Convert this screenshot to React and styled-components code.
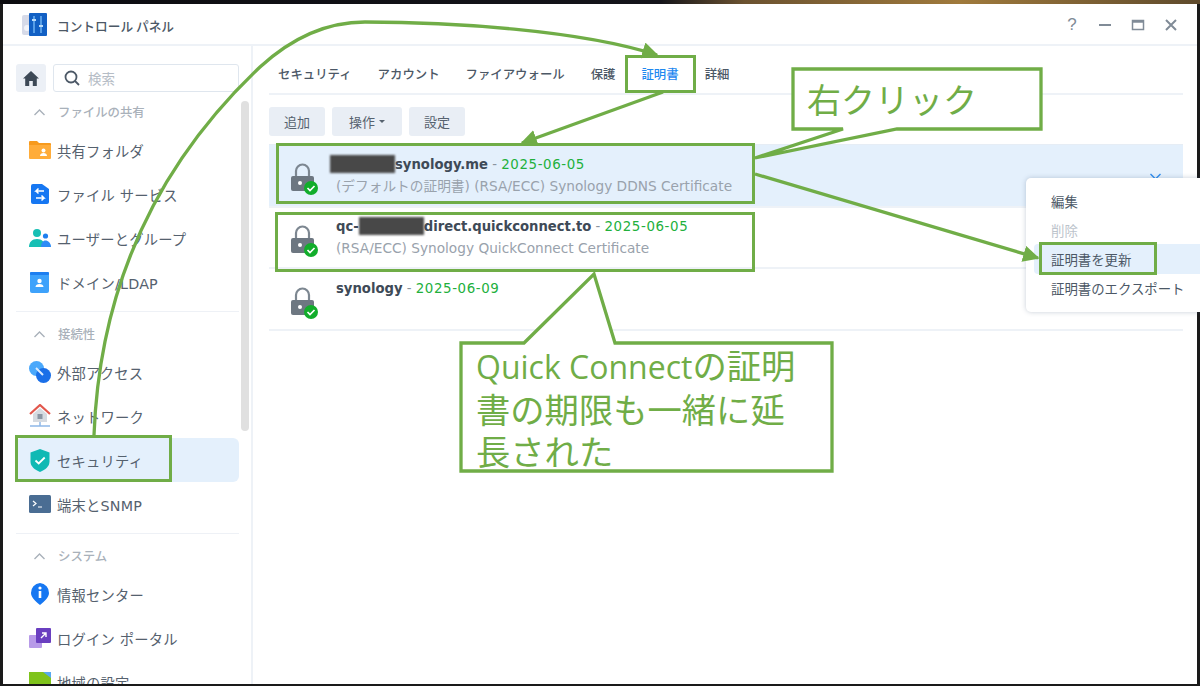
import React from 'react';
import styled, { createGlobalStyle } from 'styled-components';

const UI_FONT = '"DejaVu Sans", "Noto Sans CJK JP", sans-serif';
const GREEN = '#70ad47';

const GlobalStyle = createGlobalStyle`
  html, body { margin: 0; padding: 0; background: #fff; }
  * { box-sizing: border-box; }
`;

const Page = styled.div`
  position: relative;
  width: 1200px;
  height: 686px;
  padding: 4px 3px 2px 3px;
  overflow: hidden;
  font-family: ${UI_FONT};
  background: linear-gradient(90deg, #0c0c10 0%, #14141a 55%, #6b5230 62%, #a07a3c 80%, #5e4a2c 100%) top / 100% 4px no-repeat, #1a1a1a;
`;

const Window = styled.div`
  display: flex;
  flex-direction: column;
  height: 100%;
  background: #fff;
  overflow: hidden;
`;

const TitleBar = styled.header`
  display: flex;
  align-items: center;
  height: 42px;
  flex-shrink: 0;
  padding: 2px 19px 0 19px;
  border-bottom: 2px solid #eef2f7;
`;

const AppTitle = styled.h1`
  margin: 0 0 0 10px;
  font-size: 12.7px;
  font-weight: 500;
  color: #4c5866;
  font-family: "Noto Sans CJK JP", sans-serif;
`;

const WindowButtons = styled.div`
  display: flex;
  gap: 19px;
  margin-left: auto;
`;

const WindowButton = styled.span`
  display: flex;
  align-items: center;
  justify-content: center;
  width: 14px;
  height: 14px;
  color: #808b97;
  font-size: 17px;
  font-family: "Liberation Sans", sans-serif;
`;

const Body = styled.div`
  display: flex;
  flex: 1;
  min-height: 0;
`;

const Sidebar = styled.aside`
  width: 250px;
  flex-shrink: 0;
  padding: 18px 12px 0 13px;
  border-right: 2px solid #eef2f7;
  overflow: hidden;
`;

const SearchRow = styled.div`
  display: flex;
  gap: 7px;
  height: 28px;
  margin-bottom: 4px;
`;

const HomeButton = styled.div`
  display: flex;
  align-items: center;
  justify-content: center;
  width: 30px;
  background: #ecf0f6;
  border-radius: 3px;
  color: #3d4956;
`;

const SearchBox = styled.div`
  display: flex;
  align-items: center;
  flex: 1;
  gap: 8px;
  padding-left: 10px;
  border: 1px solid #dfe6ee;
  border-radius: 3px;
  font-size: 13.5px;
  color: #b6bdc6;
  font-family: "Noto Sans CJK JP", sans-serif;
`;

const SectionHead = styled.div`
  display: flex;
  align-items: center;
  height: 32px;
  padding-left: 17px;
  gap: 12px;
  font-size: 12.4px;
  font-weight: 500;
  color: #a9b1ba;
`;

const SectionRule = styled.hr`
  margin: 7px 0 6px;
  border: 0;
  border-top: 1px solid #eef1f6;
`;

const NavItem = styled.div`
  display: flex;
  align-items: center;
  height: 44px;
  padding-left: 12px;
  gap: 6px;
  font-size: 14.3px;
  letter-spacing: 0.2px;
  color: #55616e;
  border-radius: 6px;
  background: ${props => (props.$active ? '#e4f0fc' : 'transparent')};
`;

const NavIcon = styled.span`
  display: flex;
  align-items: center;
  justify-content: center;
  width: 23px;
  height: 24px;
  flex-shrink: 0;
`;

const ScrollThumb = styled.div`
  position: absolute;
  left: 241px;
  top: 101px;
  width: 8px;
  height: 330px;
  background: #e0e0e0;
  border-radius: 4px;
`;

const Main = styled.main`
  flex: 1;
  min-width: 0;
  padding: 0 14px 0 16px;
`;

const Tabs = styled.nav`
  display: flex;
  align-items: center;
  height: 49px;
  padding: 8px 0 0 9px;
  gap: 26px;
  border-bottom: 2px solid #eef2f7;
`;

const Tab = styled.span`
  font-size: 12.4px;
  font-weight: 500;
  font-family: "Noto Sans CJK JP", sans-serif;
  color: ${props => (props.$active ? '#1e88f0' : '#4c5866')};
`;

const Toolbar = styled.div`
  display: flex;
  gap: 7px;
  margin-top: 12px;
`;

const ToolButton = styled.button`
  display: flex;
  align-items: center;
  justify-content: center;
  gap: 4px;
  height: 29px;
  width: ${props => props.$width}px;
  padding: 0;
  border: 0;
  border-radius: 3px;
  background: #e9eef5;
  color: #56626f;
  font-size: 13px;
  font-family: "Noto Sans CJK JP", sans-serif;
`;

const Caret = styled.i`
  width: 0;
  height: 0;
  border: 3px solid transparent;
  border-top: 3px solid #56626f;
  margin-top: 3px;
`;

const CertList = styled.div`
  margin-top: 8px;
  border-top: 1px solid #e6edf5;
`;

const CertRow = styled.div`
  display: flex;
  align-items: flex-start;
  height: ${props => props.$height}px;
  padding: ${props => props.$top}px 18px 0 22px;
  gap: 18px;
  border-bottom: 2px solid #eef2f7;
  background: ${props => (props.$selected ? '#e4f0fc' : '#fff')};
`;

const LockWrap = styled.div`
  width: 27px;
  height: 34px;
  margin-top: 7px;
  flex-shrink: 0;
`;

const CertText = styled.div`
  display: flex;
  flex-direction: column;
  gap: 5px;
  flex: 1;
`;

const CertTitle = styled.div`
  display: flex;
  align-items: center;
  height: 18px;
  font-size: 13.2px;
  color: #8a949f;
  white-space: pre;
`;

const CertName = styled.b`
  color: #3e4a57;
  font-weight: 700;
`;

const CertDate = styled.span`
  color: #22b03c;
  font-size: 13.4px;
  letter-spacing: 0.6px;
`;

const Redacted = styled.span`
  display: inline-block;
  width: 65px;
  height: 18px;
  margin-left: ${props => props.$shift || 0}px;
  background: #484848;
  filter: blur(0.8px);
`;

const CertNote = styled.div`
  height: 16px;
  line-height: 16px;
  font-size: 13.7px;
  color: #99a2ac;
  white-space: nowrap;
`;

const RowChevron = styled.div`
  margin: 15px 3px 0 0;
  color: #2d8cf0;
  line-height: 0;
`;

const ContextMenu = styled.div`
  position: absolute;
  left: 1026px;
  top: 178px;
  width: 190px;
  height: 134px;
  padding: 8px 0 0 8px;
  background: #fff;
  border-radius: 5px;
  box-shadow: 0 0 5px rgba(70, 90, 120, 0.3);
`;

const MenuItem = styled.div`
  display: flex;
  align-items: center;
  height: 30px;
  padding-left: 17px;
  margin-bottom: -1px;
  font-size: 13.4px;
  font-family: "Noto Sans CJK JP", sans-serif;
  border-radius: 4px 0 0 4px;
  color: ${props => (props.$disabled ? '#bcc3cb' : '#4c5866')};
  background: ${props => (props.$hover ? '#e4f0fc' : 'transparent')};
`;

const Marker = styled.div`
  position: absolute;
  left: ${props => props.$x}px;
  top: ${props => props.$y}px;
  width: ${props => props.$w}px;
  height: ${props => props.$h}px;
  border: 3px solid ${GREEN};
`;

const Annotations = styled.svg`
  position: absolute;
  inset: 0;
  width: 1200px;
  height: 686px;
`;

const CalloutText = styled.div`
  position: absolute;
  left: ${props => props.$x}px;
  top: ${props => props.$y}px;
  width: ${props => props.$w}px;
  color: ${GREEN};
  font-family: "Open Sans", "Noto Sans CJK JP", sans-serif;
  font-size: ${props => props.$size}px;
  line-height: ${props => props.$line}px;
  font-weight: 400;
  white-space: pre-line;
`;

const CalloutLatin = styled.span`
  font-size: 32px;
`;

function FolderIcon() {
  return (
    <svg width="22" height="20" viewBox="0 0 22 20">
      <path d="M0 2a1 1 0 0 1 1-1h7l2 2h11a1 1 0 0 1 1 1v2H0z" fill="#f79a1e" />
      <path d="M0 5h22v13a1 1 0 0 1-1 1H1a1 1 0 0 1-1-1z" fill="#ffac3a" />
      <circle cx="14.5" cy="10.5" r="2" fill="#fff" />
      <path d="M11 16c0-2 1.500-3 3.500-3s3.500 1 3.500 3z" fill="#fff" />
    </svg>
  );
}

function FileServiceIcon() {
  return (
    <svg width="20" height="22" viewBox="0 0 20 22">
      <path d="M1 3a2 2 0 0 1 2-2h9l7 5v13a2 2 0 0 1-2 2H3a2 2 0 0 1-2-2z" fill="#1677f2" />
      <path d="M14 8H6l2.500-2.500M6 8l2.500 2.500M6 15h8l-2.500-2.500M14 15l-2.500 2.500" stroke="#fff" strokeWidth="1.500" fill="none" />
    </svg>
  );
}

function UsersIcon() {
  return (
    <svg width="22" height="20" viewBox="0 0 22 20">
      <circle cx="8" cy="5" r="4" fill="#17bfb4" />
      <path d="M0 19c0-5 3-8 8-8s8 3 8 8z" fill="#17bfb4" />
      <circle cx="16.500" cy="8" r="2.600" fill="#1e7ff0" />
      <path d="M12 19c0-4 2-6.500 4.500-6.500S22 15 22 19z" fill="#2d8cf6" />
    </svg>
  );
}

function DomainIcon() {
  return (
    <svg width="19" height="21" viewBox="0 0 19 21">
      <rect x="0" y="0" width="19" height="21" rx="2" fill="#3ea2fb" />
      <rect x="0" y="0" width="19" height="3" rx="1" fill="#1e7ff0" />
      <circle cx="9.500" cy="9" r="2.200" fill="#fff" />
      <path d="M5.500 15c0-2 1.800-3 4-3s4 1 4 3z" fill="#fff" />
    </svg>
  );
}

function LinkIcon() {
  return (
    <svg width="22" height="22" viewBox="0 0 22 22">
      <circle cx="7.500" cy="7.500" r="7.500" fill="#4aa8fb" />
      <circle cx="14.500" cy="14.500" r="7.500" fill="#1a6fe8" />
      <path d="M7 7l7 7" stroke="#dcecff" strokeWidth="2" />
    </svg>
  );
}

function HouseIcon() {
  return (
    <svg width="22" height="24" viewBox="0 0 22 24">
      <path d="M1 10L11 1l10 9" fill="none" stroke="#e2574c" strokeWidth="2.200" />
      <path d="M4 10l7-6 7 6v8H4z" fill="#d5dae0" />
      <rect x="8.500" y="10" width="5" height="5" fill="#8a96a3" />
      <path d="M1 22h20M11 18v4" stroke="#8fb8e8" strokeWidth="1.500" />
    </svg>
  );
}

function ShieldIcon() {
  return (
    <svg width="20" height="23" viewBox="0 0 20 23">
      <path d="M10 0l9.500 3.500v9c0 5-4 8-9.500 10.500C4.500 20.500.5 17.500.5 12.500v-9z" fill="#10b9b4" />
      <path d="M5.500 11.500l3.200 3 6-6" fill="none" stroke="#fff" strokeWidth="1.800" />
    </svg>
  );
}

function TerminalIcon() {
  return (
    <svg width="22" height="18" viewBox="0 0 22 18">
      <rect width="22" height="18" rx="1.500" fill="#4a6d93" />
      <path d="M4 6l3 2.500L4 11M9 12h4" fill="none" stroke="#fff" strokeWidth="1.200" />
    </svg>
  );
}

function InfoIcon() {
  return (
    <svg width="20" height="22" viewBox="0 0 20 22">
      <path d="M10 0a9.500 9.500 0 0 1 9 10c0 4-4 8-9 12C5 18 1 14 1 10a9.500 9.500 0 0 1 9-10z" fill="#1677f2" />
      <rect x="8.700" y="8" width="2.600" height="7" fill="#fff" />
      <circle cx="10" cy="5" r="1.600" fill="#fff" />
    </svg>
  );
}

function PortalIcon() {
  return (
    <svg width="22" height="22" viewBox="0 0 22 22">
      <rect x="0" y="8" width="13" height="13" rx="1" fill="#b79ae8" />
      <rect x="7" y="1" width="15" height="15" rx="1" fill="#6a3fc0" />
      <path d="M12 11l5-5M13 6h4v4" fill="none" stroke="#fff" strokeWidth="1.400" />
    </svg>
  );
}

function RegionIcon() {
  return (
    <svg width="22" height="20" viewBox="0 0 22 20">
      <rect width="22" height="20" fill="#7fc31c" />
      <path d="M14 0h8v6z" fill="#58a8f0" />
    </svg>
  );
}

function LockIcon() {
  return (
    <svg width="27" height="34" viewBox="0 0 27 34">
      <path d="M5 15V9a6.500 6.500 0 0 1 13 0v6" fill="none" stroke="#7d8791" strokeWidth="2.200" />
      <rect x="0" y="14" width="23" height="15" rx="2" fill="#6d7781" />
      <circle cx="9" cy="21" r="2" fill="#fff" />
      <circle cx="20" cy="26" r="7" fill="#12ad2b" />
      <path d="M16.500 26l2.500 2.500 4.500-4.500" fill="none" stroke="#fff" strokeWidth="1.700" />
    </svg>
  );
}

const sections = [
  {
    title: 'ファイルの共有',
    items: [
      ['共有フォルダ', FolderIcon],
      ['ファイル サービス', FileServiceIcon],
      ['ユーザーとグループ', UsersIcon],
      ['ドメイン/LDAP', DomainIcon],
    ],
  },
  {
    title: '接続性',
    items: [
      ['外部アクセス', LinkIcon],
      ['ネットワーク', HouseIcon],
      ['セキュリティ', ShieldIcon, true],
      ['端末とSNMP', TerminalIcon],
    ],
  },
  {
    title: 'システム',
    items: [
      ['情報センター', InfoIcon],
      ['ログイン ポータル', PortalIcon],
      ['地域の設定', RegionIcon],
    ],
  },
];

const tabs = ['セキュリティ', 'アカウント', 'ファイアウォール', '保護', '証明書', '詳細'];

function Chevron({ size = 13, up }) {
  return (
    <svg width={size} height={size} viewBox="0 0 13 13" fill="none" stroke="currentColor" strokeWidth="1.400">
      <path d={up ? 'M1.500 9l5-5 5 5' : 'M1.500 4l5 5 5-5'} />
    </svg>
  );
}

function App() {
  return (
    <Page>
      <GlobalStyle />
      <Window>
        <TitleBar>
          <svg width="25" height="24" viewBox="0 0 25 24">
            <rect x="0" y="2" width="10" height="20" rx="2" fill="#d6dae8" />
            <circle cx="5" cy="15" r="3" fill="#f2f4fa" />
            <rect x="7" y="0" width="18" height="23" rx="1" fill="#1260c4" />
            <path d="M12 3v17M19 3v17" stroke="#6fb2f2" strokeWidth="1.500" />
            <rect x="10" y="6" width="4" height="2" fill="#bcdcf8" />
            <rect x="17" y="12" width="4" height="2" fill="#bcdcf8" />
          </svg>
          <AppTitle>コントロール パネル</AppTitle>
          <WindowButtons>
            <WindowButton>?</WindowButton>
            <WindowButton>
              <svg width="14" height="14" viewBox="0 0 14 14"><path d="M1 7h12" stroke="currentColor" strokeWidth="2" /></svg>
            </WindowButton>
            <WindowButton>
              <svg width="14" height="14" viewBox="0 0 14 14"><rect x="1.500" y="2.500" width="11" height="9" fill="none" stroke="currentColor" strokeWidth="1.500" /><path d="M1 3.500h12" stroke="currentColor" strokeWidth="2.500" /></svg>
            </WindowButton>
            <WindowButton>
              <svg width="14" height="14" viewBox="0 0 14 14"><path d="M2 2l10 10M12 2L2 12" stroke="currentColor" strokeWidth="2" /></svg>
            </WindowButton>
          </WindowButtons>
        </TitleBar>
        <Body>
          <Sidebar>
            <SearchRow>
              <HomeButton>
                <svg width="16" height="15" viewBox="0 0 16 15"><path d="M8 0L0 7.500h2.200V15h4v-5h3.600v5h4V7.500H16z" fill="currentColor" /></svg>
              </HomeButton>
              <SearchBox>
                <svg width="16" height="16" viewBox="0 0 16 16" fill="none" stroke="#4c5866" strokeWidth="1.800"><circle cx="7" cy="7" r="5.500" /><path d="M11 11l4 4" /></svg>
                検索
              </SearchBox>
            </SearchRow>
            {sections.map((section, i) => (
              <React.Fragment key={section.title}>
                {i > 0 && <SectionRule />}
                <SectionHead>
                  <Chevron up />
                  {section.title}
                </SectionHead>
                {section.items.map(([label, Icon, active]) => (
                  <NavItem key={label} $active={active}>
                    <NavIcon><Icon /></NavIcon>
                    {label}
                  </NavItem>
                ))}
              </React.Fragment>
            ))}
          </Sidebar>
          <Main>
            <Tabs>
              {tabs.map(tab => (
                <Tab key={tab} $active={tab === '証明書'}>{tab}</Tab>
              ))}
            </Tabs>
            <Toolbar>
              <ToolButton $width={56}>追加</ToolButton>
              <ToolButton $width={70}>操作 <Caret /></ToolButton>
              <ToolButton $width={56}>設定</ToolButton>
            </Toolbar>
            <CertList>
              <CertRow $selected $height={63} $top={10}>
                <LockWrap><LockIcon /></LockWrap>
                <CertText>
                  <CertTitle><Redacted $shift={-6} /><CertName>synology.me</CertName> - <CertDate>2025-06-05</CertDate></CertTitle>
                  <CertNote>(デフォルトの証明書) (RSA/ECC) Synology DDNS Certificate</CertNote>
                </CertText>
                <RowChevron><Chevron /></RowChevron>
              </CertRow>
              <CertRow $height={61} $top={9}>
                <LockWrap><LockIcon /></LockWrap>
                <CertText>
                  <CertTitle><CertName>qc-</CertName><Redacted /><CertName>direct.quickconnect.to</CertName> - <CertDate>2025-06-05</CertDate></CertTitle>
                  <CertNote>(RSA/ECC) Synology QuickConnect Certificate</CertNote>
                </CertText>
              </CertRow>
              <CertRow $height={62} $top={10}>
                <LockWrap><LockIcon /></LockWrap>
                <CertText>
                  <CertTitle><CertName>synology</CertName> - <CertDate>2025-06-09</CertDate></CertTitle>
                </CertText>
              </CertRow>
            </CertList>
          </Main>
        </Body>
      </Window>

      <ScrollThumb />

      <ContextMenu>
        <MenuItem>編集</MenuItem>
        <MenuItem $disabled>削除</MenuItem>
        <MenuItem $hover>証明書を更新</MenuItem>
        <MenuItem>証明書のエクスポート</MenuItem>
      </ContextMenu>

      <Marker $x={15} $y={435} $w={157} $h={47} />
      <Marker $x={625} $y={55} $w={71} $h={38} />
      <Marker $x={276} $y={143} $w={479} $h={61} />
      <Marker $x={275} $y={212} $w={480} $h={60} />
      <Marker $x={1039} $y={242} $w={118} $h={33} />

      <Annotations viewBox="0 0 1200 686">
        <defs>
          <marker id="head" markerWidth="5" markerHeight="5" refX="4.500" refY="2.500" orient="auto">
            <path d="M0 0L5 2.500L0 5z" fill={GREEN} />
          </marker>
        </defs>
        <g fill="none" stroke={GREEN} strokeWidth="3.300">
          <path d="M94 435C98 330 130 190 260 67C295 35 330 22 365 22C450 22 580 30 657 55" markerEnd="url(#head)" />
          <path d="M663 92L522 143" markerEnd="url(#head)" />
          <path d="M755 174L1038 258" markerEnd="url(#head)" />
          <path d="M793 69H1041V129H897L755 158L843 129H793Z" fill="#fff" />
          <path d="M461 343H524L594 274L615 343H832V471H461Z" fill="#fff" />
        </g>
      </Annotations>

      <CalloutText $x={807} $y={76} $w={220} $size={34} $line={48}>右クリック</CalloutText>
      <CalloutText $x={476} $y={345} $w={350} $size={34.3} $line={42.5}>
        <CalloutLatin>Quick Connect</CalloutLatin>{'の証明\n書の期限も一緒に延\n長された'}
      </CalloutText>
    </Page>
  );
}

export default App;
